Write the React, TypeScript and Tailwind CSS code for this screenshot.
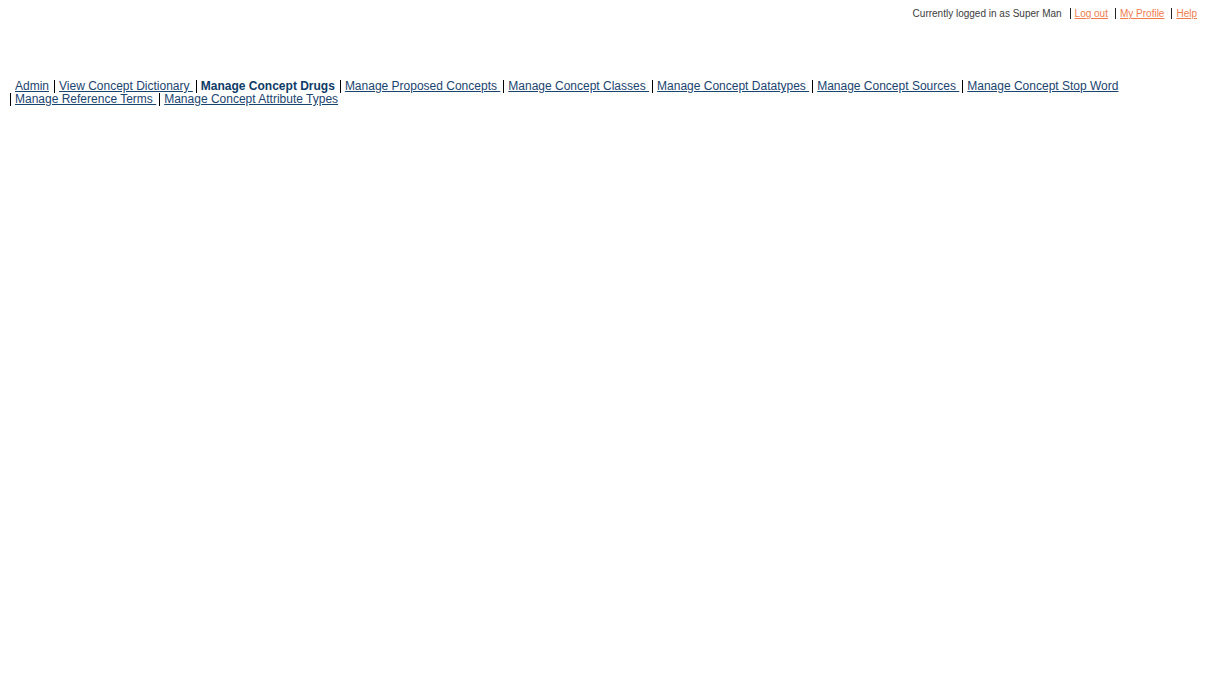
const userLinks = ["Log out", "My Profile", "Help"];

const menu = [
  { label: "Admin" },
  { label: "View Concept Dictionary " },
  { label: "Manage Concept Drugs", active: true },
  { label: "Manage Proposed Concepts " },
  { label: "Manage Concept Classes " },
  { label: "Manage Concept Datatypes " },
  { label: "Manage Concept Sources " },
  { label: "Manage Concept Stop Word" },
  { label: "Manage Reference Terms " },
  { label: "Manage Concept Attribute Types" },
];

export default function App() {
  return (
    <div className="min-h-screen bg-white px-2 font-['Liberation_Sans',Arial,sans-serif]">
      <header className="flex h-20 items-start justify-end pt-2 pr-[5px] text-[10px] leading-[11px] text-[#3c3c3c]">
        <span className="pr-2">Currently logged in as Super Man</span>
        {userLinks.map((label) => (
          <span key={label} className="border-l border-[#222222] pr-[7px] pl-1 last:pr-0">
            <a href="#" className="text-[#f07c4c] underline">{label}</a>
          </span>
        ))}
      </header>
      <nav>
        <ul className="flex flex-wrap pl-[2px] text-[12px] leading-[13px] text-[#1a4470]">
          {menu.map(({ label, active }) => (
            <li
              key={label}
              className={`border-l border-black pl-1 first:border-transparent ${label.endsWith(" ") ? "pr-[3px]" : "pr-[5px]"}`}
            >
              <a href="#" className={active ? "font-bold whitespace-pre text-[#0c3a66]" : "whitespace-pre underline"}>{label}</a>
            </li>
          ))}
        </ul>
      </nav>
    </div>
  );
}
